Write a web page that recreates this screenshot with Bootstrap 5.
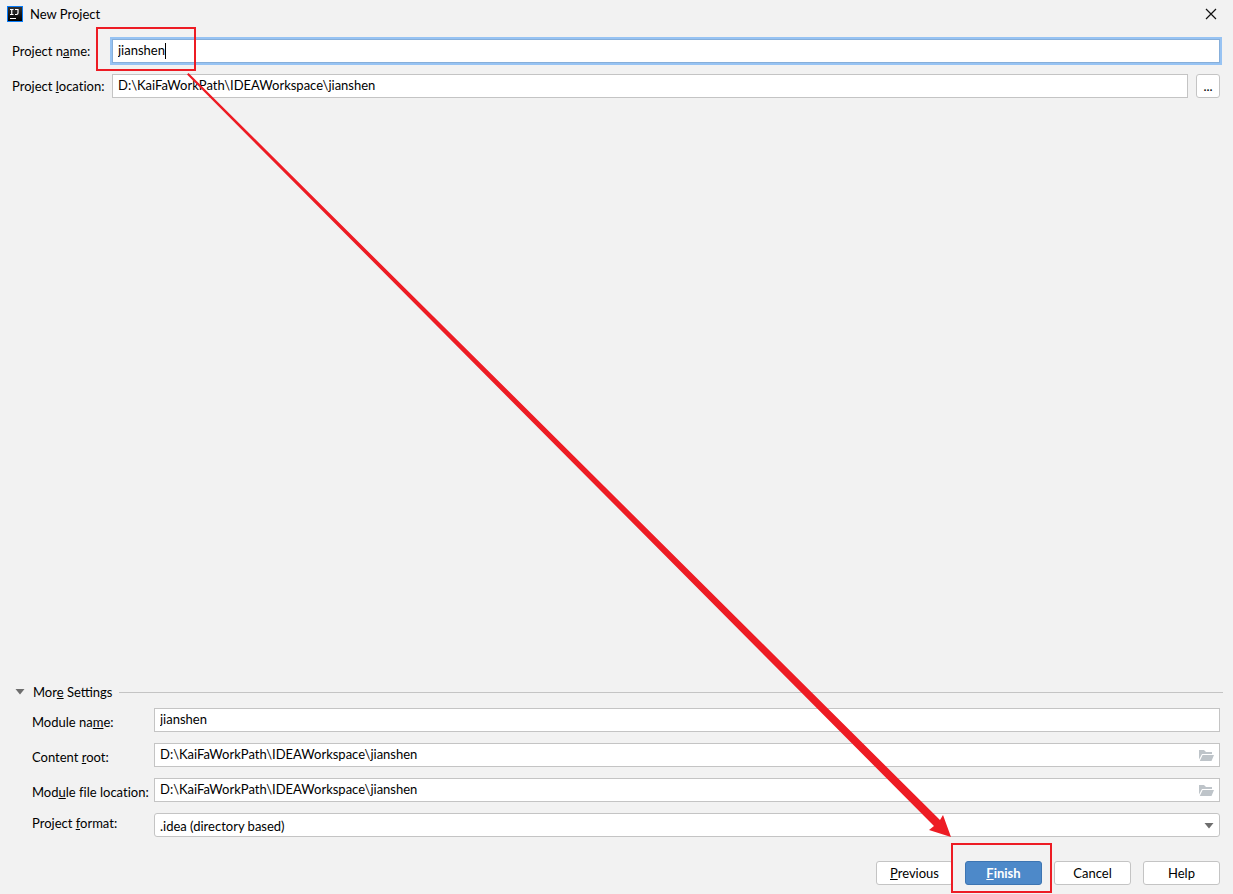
<!DOCTYPE html>
<html lang="en">
<head>
<meta charset="utf-8">
<meta name="viewport" content="width=device-width, initial-scale=1">
<title>New Project</title>
<link href="https://cdn.jsdelivr.net/npm/bootstrap@5.3.0/dist/css/bootstrap.min.css" rel="stylesheet">
<style>
body{background:#f2f2f2;color:#000;font-family:Lato,"Noto Sans",sans-serif;font-size:13px;line-height:18px;font-variant-ligatures:none}
.title-bar{height:28px;padding:0 16px 0 7px}
.title-bar h1{font-size:13px;line-height:18px;font-weight:400;margin-left:7px}
.win-close{width:12px;height:12px;line-height:0}
.main-form{padding:11px 13px 0 12px}
.main-form .field-row{margin-bottom:11px}
.field-row label{flex:none;white-space:nowrap}
.main-form label{width:100px}
.ide-field{height:24px;min-height:24px;border:1px solid #c4c4c4;border-radius:0;background:#fff;color:#000;font-size:13px;line-height:18px;padding:0 5px 2px}
.ide-field.active-field{border-color:#87afda;box-shadow:0 0 0 2px #97c3f3}
select.ide-field{border-radius:3px;background-image:none;padding:2px 24px 0 5px}
.caret-bar{position:absolute;left:53px;top:4px;width:1px;height:16px;background:#000}
.ide-btn{height:24px;padding:0;border:1px solid #c4c4c4;border-radius:3px;background:#fff;color:#000;font-size:13px;line-height:18px}
.browse-btn{width:24px}
.dialog-btn{width:77px}
.ide-btn.default-btn{background:#4d89c9;border-color:#3d75b2;color:#fff;font-weight:700}
.more-head{padding:0 10px 7px 15px}
.more-head button{border:0;background:none;padding:0;color:#000}
.more-head hr{margin:0 0 0 6px;border-color:#c4c4c4;opacity:1}
.more-form{padding:0 13px 0 32px}
.more-form .field-row{margin-bottom:11px}
.more-form label{width:122px}
.more-form .low-label{padding-top:4px}
.end-icon{position:absolute;right:6px;top:6px;pointer-events:none}
.footer-bar{padding:13px 13px 9px;gap:12px}
.mark-box{position:absolute;border:2px solid #ed1c24;pointer-events:none;z-index:3}
.mark-name{left:-16px;top:-12px;width:100px;height:44px}
.mark-finish{left:-14px;top:-18px;width:101px;height:50px}
.mark-arrow{position:absolute;left:187px;top:73px;width:calc(100% - 469px);height:calc(100% - 130px);pointer-events:none;z-index:2}
</style>
</head>
<body>
<div class="position-relative min-vh-100 d-flex flex-column">
  <header class="title-bar d-flex align-items-center">
    <svg width="16" height="16" viewBox="0 0 16 16" aria-hidden="true">
      <defs><linearGradient id="logo" x2="0" y2="1"><stop stop-color="#333"/><stop offset="1" stop-color="#000"/></linearGradient></defs>
      <path fill="#087cfa" d="M0 0h16v16H0z"/><path fill="url(#logo)" d="M1 1h14v14H1z"/>
      <path d="M3 3.500h3.500M4.750 3.500v5M3 8.500h3.500M8 3.500h3v3.600q0 1.400-1.400 1.400H8" fill="none" stroke="#fff" stroke-width="1.200"/><path fill="#fff" d="M3 12h6v1H3z"/>
    </svg>
    <h1 class="mb-0 flex-grow-1">New Project</h1>
    <button type="button" class="win-close border-0 bg-transparent p-0" aria-label="Close">
      <svg width="12" height="12" viewBox="0 0 12 12"><path d="M1 1l10 10M11 1L1 11" stroke="#111" stroke-width="1.200"/></svg>
    </button>
  </header>

  <main class="d-flex flex-column flex-grow-1">
    <div class="main-form">
      <div class="field-row d-flex align-items-center">
        <label for="pname">Project n<u>a</u>me:</label>
        <div class="position-relative flex-grow-1">
          <input id="pname" class="form-control ide-field active-field" value="jianshen">
          <span class="caret-bar"></span>
          <span class="mark-box mark-name"></span>
        </div>
      </div>
      <div class="field-row d-flex align-items-center">
        <label for="ploc">Project <u>l</u>ocation:</label>
        <input id="ploc" class="form-control ide-field" value="D:\KaiFaWorkPath\IDEAWorkspace\jianshen">
        <button type="button" class="btn ide-btn browse-btn flex-shrink-0 ms-2" aria-label="Browse">...</button>
      </div>
    </div>

    <section class="mt-auto">
      <div class="more-head d-flex align-items-center">
        <button type="button" class="d-flex align-items-center" aria-expanded="true">
          <svg width="10" height="6" viewBox="0 0 10 6" aria-hidden="true"><path fill="#6e6e6e" d="M.5 0h9L5 5.500z"/></svg>
          <span class="ms-2">Mor<u>e</u> Settings</span>
        </button>
        <hr class="flex-grow-1">
      </div>
      <div class="more-form">
        <div class="field-row d-flex align-items-center">
          <label class="low-label" for="mname">Module na<u>m</u>e:</label>
          <input id="mname" class="form-control ide-field" value="jianshen">
        </div>
        <div class="field-row d-flex align-items-center">
          <label class="low-label" for="croot">Content <u>r</u>oot:</label>
          <div class="position-relative flex-grow-1">
            <input id="croot" class="form-control ide-field" value="D:\KaiFaWorkPath\IDEAWorkspace\jianshen">
            <svg class="end-icon" width="15" height="12" viewBox="0 0 15 12" aria-hidden="true"><path fill="#bec4c9" d="M0 1h5l2 2h6v2H3L0 10.500zM3.600 6H15l-2.500 6H.8z"/></svg>
          </div>
        </div>
        <div class="field-row d-flex align-items-center">
          <label class="low-label" for="mloc">Mod<u>u</u>le file location:</label>
          <div class="position-relative flex-grow-1">
            <input id="mloc" class="form-control ide-field" value="D:\KaiFaWorkPath\IDEAWorkspace\jianshen">
            <svg class="end-icon" width="15" height="12" viewBox="0 0 15 12" aria-hidden="true"><path fill="#bec4c9" d="M0 1h5l2 2h6v2H3L0 10.500zM3.600 6H15l-2.500 6H.8z"/></svg>
          </div>
        </div>
        <div class="d-flex align-items-center field-row">
          <label class="pb-1" for="pformat">Project <u>f</u>ormat:</label>
          <div class="position-relative flex-grow-1">
            <select id="pformat" class="form-select ide-field"><option>.idea (directory based)</option></select>
            <svg class="end-icon" width="10" height="12" viewBox="0 0 10 12" aria-hidden="true"><path fill="#6e6e6e" d="M.5 4h9L5 9.500z"/></svg>
          </div>
        </div>
      </div>
    </section>
  </main>

  <footer class="footer-bar d-flex justify-content-end">
    <button type="button" class="btn ide-btn dialog-btn"><u>P</u>revious</button>
    <div class="position-relative">
      <button type="button" class="btn ide-btn dialog-btn default-btn"><u>F</u>inish</button>
      <span class="mark-box mark-finish"></span>
    </div>
    <button type="button" class="btn ide-btn dialog-btn">Cancel</button>
    <button type="button" class="btn ide-btn dialog-btn">Help</button>
  </footer>

  <svg class="mark-arrow" viewBox="0 0 764 764" preserveAspectRatio="none" aria-hidden="true">
    <path fill="#ed1c24" d="M0 1.500L1.500 0 753 747 756 742 764 764 742 757 747 753z"/>
  </svg>
</div>
<script src="https://cdn.jsdelivr.net/npm/bootstrap@5.3.0/dist/js/bootstrap.bundle.min.js"></script>
</body>
</html>
